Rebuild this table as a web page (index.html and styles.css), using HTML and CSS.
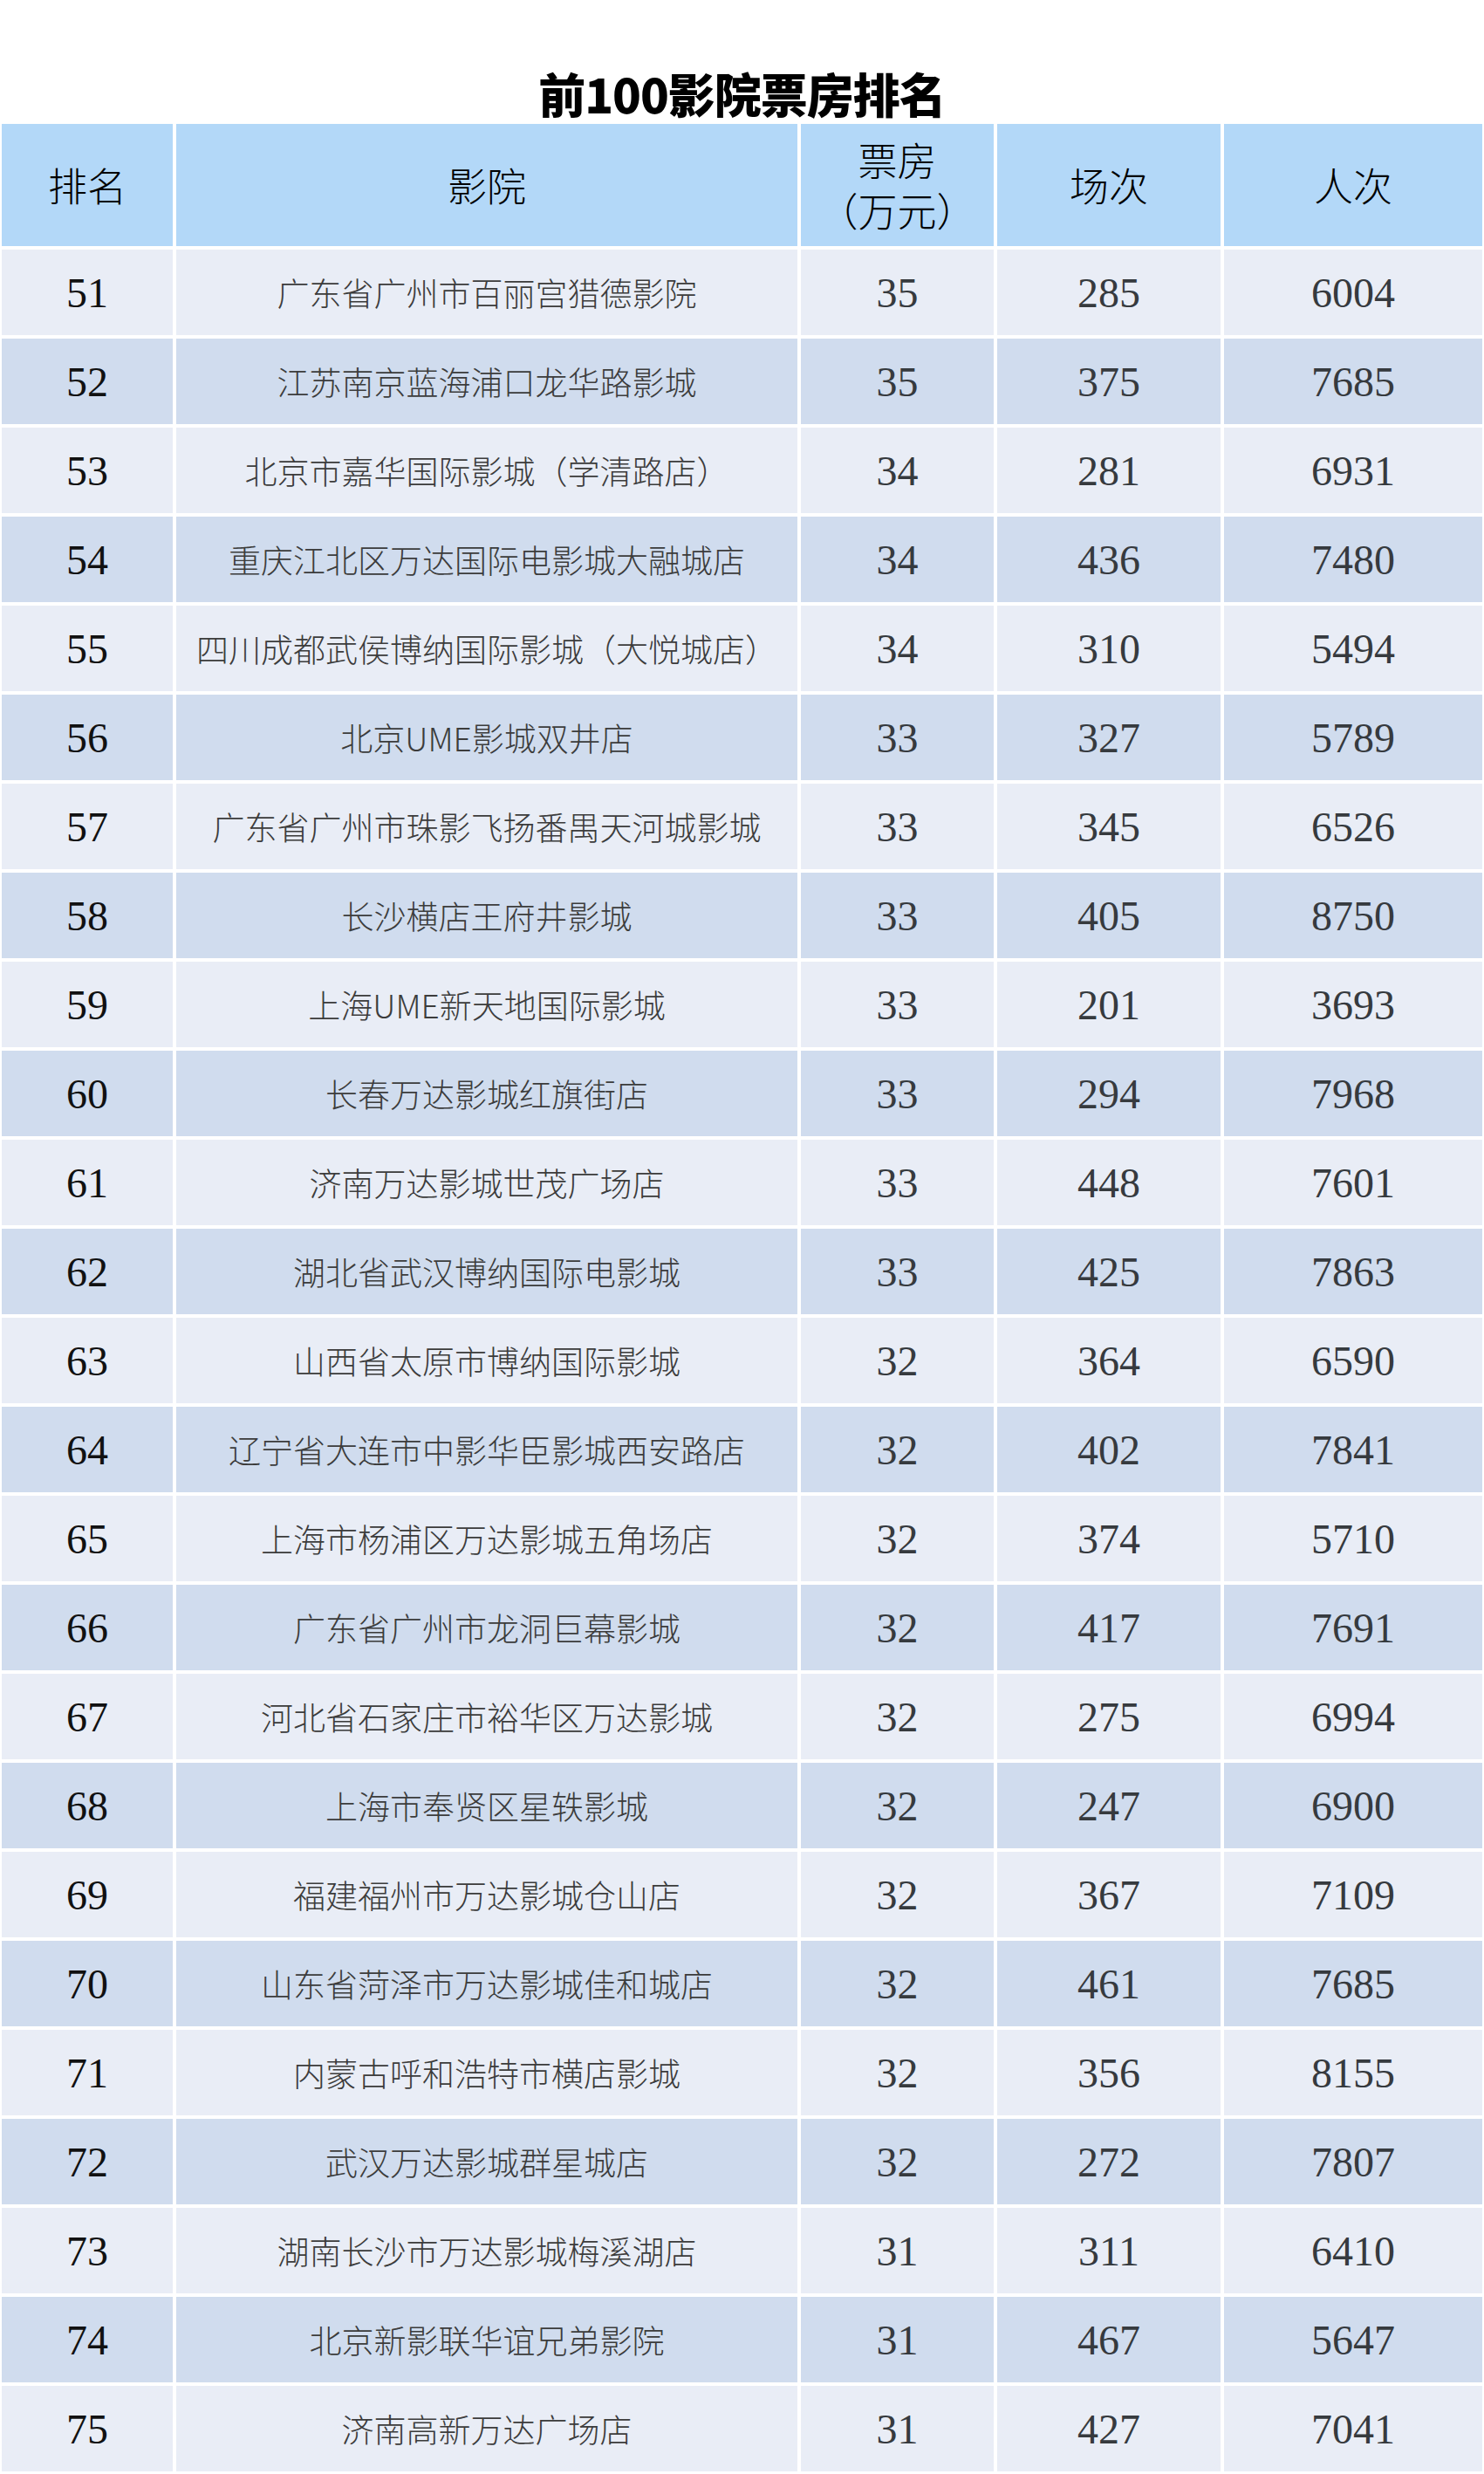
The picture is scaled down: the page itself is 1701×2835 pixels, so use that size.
FILE: index.html
```html
<!DOCTYPE html>
<html lang="zh-CN">
<head>
<meta charset="utf-8">
<title>前100影院票房排名</title>
<link rel="stylesheet" href="styles.css">
</head>
<body>
<h1 class="title">前100影院票房排名</h1>
<div class="table">
  <div class="row head">
    <div class="cell">排名</div>
    <div class="cell">影院</div>
    <div class="cell two">票房<br>（万元）</div>
    <div class="cell">场次</div>
    <div class="cell">人次</div>
  </div>
  <div class="row odd"><div class="cell rank">51</div><div class="cell name">广东省广州市百丽宫猎德影院</div><div class="cell num">35</div><div class="cell num">285</div><div class="cell num">6004</div></div>
  <div class="row even"><div class="cell rank">52</div><div class="cell name">江苏南京蓝海浦口龙华路影城</div><div class="cell num">35</div><div class="cell num">375</div><div class="cell num">7685</div></div>
  <div class="row odd"><div class="cell rank">53</div><div class="cell name">北京市嘉华国际影城（学清路店）</div><div class="cell num">34</div><div class="cell num">281</div><div class="cell num">6931</div></div>
  <div class="row even"><div class="cell rank">54</div><div class="cell name">重庆江北区万达国际电影城大融城店</div><div class="cell num">34</div><div class="cell num">436</div><div class="cell num">7480</div></div>
  <div class="row odd"><div class="cell rank">55</div><div class="cell name">四川成都武侯博纳国际影城（大悦城店）</div><div class="cell num">34</div><div class="cell num">310</div><div class="cell num">5494</div></div>
  <div class="row even"><div class="cell rank">56</div><div class="cell name">北京UME影城双井店</div><div class="cell num">33</div><div class="cell num">327</div><div class="cell num">5789</div></div>
  <div class="row odd"><div class="cell rank">57</div><div class="cell name">广东省广州市珠影飞扬番禺天河城影城</div><div class="cell num">33</div><div class="cell num">345</div><div class="cell num">6526</div></div>
  <div class="row even"><div class="cell rank">58</div><div class="cell name">长沙横店王府井影城</div><div class="cell num">33</div><div class="cell num">405</div><div class="cell num">8750</div></div>
  <div class="row odd"><div class="cell rank">59</div><div class="cell name">上海UME新天地国际影城</div><div class="cell num">33</div><div class="cell num">201</div><div class="cell num">3693</div></div>
  <div class="row even"><div class="cell rank">60</div><div class="cell name">长春万达影城红旗街店</div><div class="cell num">33</div><div class="cell num">294</div><div class="cell num">7968</div></div>
  <div class="row odd"><div class="cell rank">61</div><div class="cell name">济南万达影城世茂广场店</div><div class="cell num">33</div><div class="cell num">448</div><div class="cell num">7601</div></div>
  <div class="row even"><div class="cell rank">62</div><div class="cell name">湖北省武汉博纳国际电影城</div><div class="cell num">33</div><div class="cell num">425</div><div class="cell num">7863</div></div>
  <div class="row odd"><div class="cell rank">63</div><div class="cell name">山西省太原市博纳国际影城</div><div class="cell num">32</div><div class="cell num">364</div><div class="cell num">6590</div></div>
  <div class="row even"><div class="cell rank">64</div><div class="cell name">辽宁省大连市中影华臣影城西安路店</div><div class="cell num">32</div><div class="cell num">402</div><div class="cell num">7841</div></div>
  <div class="row odd"><div class="cell rank">65</div><div class="cell name">上海市杨浦区万达影城五角场店</div><div class="cell num">32</div><div class="cell num">374</div><div class="cell num">5710</div></div>
  <div class="row even"><div class="cell rank">66</div><div class="cell name">广东省广州市龙洞巨幕影城</div><div class="cell num">32</div><div class="cell num">417</div><div class="cell num">7691</div></div>
  <div class="row odd"><div class="cell rank">67</div><div class="cell name">河北省石家庄市裕华区万达影城</div><div class="cell num">32</div><div class="cell num">275</div><div class="cell num">6994</div></div>
  <div class="row even"><div class="cell rank">68</div><div class="cell name">上海市奉贤区星轶影城</div><div class="cell num">32</div><div class="cell num">247</div><div class="cell num">6900</div></div>
  <div class="row odd"><div class="cell rank">69</div><div class="cell name">福建福州市万达影城仓山店</div><div class="cell num">32</div><div class="cell num">367</div><div class="cell num">7109</div></div>
  <div class="row even"><div class="cell rank">70</div><div class="cell name">山东省菏泽市万达影城佳和城店</div><div class="cell num">32</div><div class="cell num">461</div><div class="cell num">7685</div></div>
  <div class="row odd"><div class="cell rank">71</div><div class="cell name">内蒙古呼和浩特市横店影城</div><div class="cell num">32</div><div class="cell num">356</div><div class="cell num">8155</div></div>
  <div class="row even"><div class="cell rank">72</div><div class="cell name">武汉万达影城群星城店</div><div class="cell num">32</div><div class="cell num">272</div><div class="cell num">7807</div></div>
  <div class="row odd"><div class="cell rank">73</div><div class="cell name">湖南长沙市万达影城梅溪湖店</div><div class="cell num">31</div><div class="cell num">311</div><div class="cell num">6410</div></div>
  <div class="row even"><div class="cell rank">74</div><div class="cell name">北京新影联华谊兄弟影院</div><div class="cell num">31</div><div class="cell num">467</div><div class="cell num">5647</div></div>
  <div class="row odd"><div class="cell rank">75</div><div class="cell name">济南高新万达广场店</div><div class="cell num">31</div><div class="cell num">427</div><div class="cell num">7041</div></div>
</div>
</body>
</html>
```

FILE: styles.css
```css
html, body {
  margin: 0;
  padding: 0;
  background: #ffffff;
}

body {
  font-family: "Liberation Serif", "Noto Sans CJK SC", serif;
}

.title {
  margin: 77px 0 5px 0;
  height: 60px;
  line-height: 60px;
  font-family: "Noto Sans CJK SC", "Noto Sans", sans-serif;
  font-weight: 900;
  font-size: 54px;
  color: #000000;
  text-align: center;
  letter-spacing: -1px;
}

.table {
  margin-left: 2px;
  width: 1697px;
  display: flex;
  flex-direction: column;
  gap: 4px;
}

.row {
  display: grid;
  grid-template-columns: 196px 712px 221px 256px 296px;
  column-gap: 4px;
  height: 98px;
}

.row.head {
  height: 140px;
}

.cell {
  display: flex;
  align-items: center;
  justify-content: center;
  text-align: center;
}

.head .cell {
  background: #b3d8f8;
  font-family: "Noto Sans CJK SC", sans-serif;
  font-weight: 300;
  font-size: 45px;
  color: #000000;
  line-height: 58px;
}

.odd .cell {
  background: #e9edf6;
}

.even .cell {
  background: #d0dcee;
}

.rank {
  font-family: "Liberation Serif", serif;
  font-size: 48px;
  color: #111111;
}

.num {
  font-family: "Liberation Serif", serif;
  font-size: 48px;
  color: #363a3e;
}

.name {
  font-family: "Noto Sans CJK SC", sans-serif;
  font-weight: 300;
  font-size: 37px;
  color: #3c3c3c;
}
```
